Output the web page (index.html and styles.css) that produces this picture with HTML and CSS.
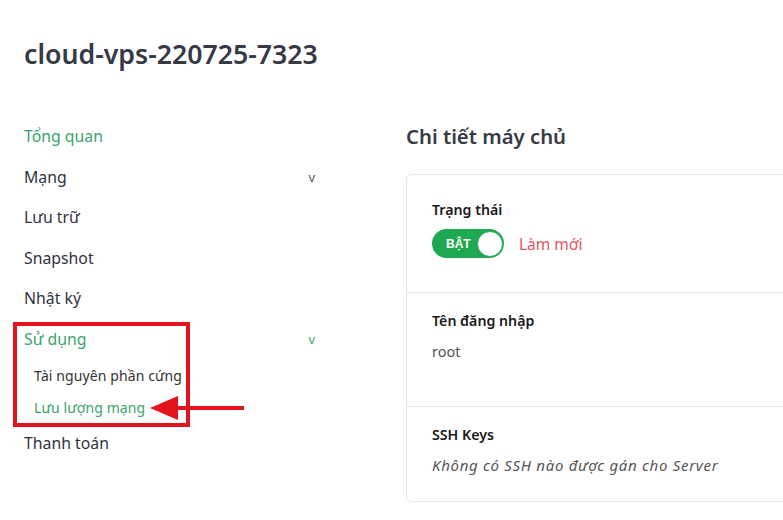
FILE: index.html
```html
<!DOCTYPE html>
<html lang="vi">
<head>
<meta charset="utf-8">
<link rel="stylesheet" href="styles.css">
</head>
<body>
<div class="page">
  <h1 class="title">cloud-vps-220725-7323</h1>
  <div class="layout">
    <nav class="sidebar">
      <div class="nav-item active">Tổng quan</div>
      <div class="nav-item">Mạng <span class="chev">v</span></div>
      <div class="nav-item">Lưu trữ</div>
      <div class="nav-item">Snapshot</div>
      <div class="nav-item">Nhật ký</div>
      <div class="group">
        <div class="nav-item active">Sử dụng <span class="chev green">v</span></div>
        <div class="sub-item">Tài nguyên phần cứng</div>
        <div class="sub-item active">Lưu lượng mạng</div>
        <div class="highlight"></div>
        <div class="arrow">
          <svg width="96" height="28" viewBox="0 0 96 28"><polygon points="0,14 28,2 28,26" fill="#e3141d"/><rect x="26" y="12" width="68" height="4" fill="#e3141d"/></svg>
        </div>
      </div>
      <div class="nav-item">Thanh toán</div>
    </nav>
    <main class="content">
      <h2 class="section-title">Chi tiết máy chủ</h2>
      <div class="card">
        <div class="row row-status">
          <div class="label">Trạng thái</div>
          <div class="status-line">
            <div class="toggle"><span class="toggle-text">BẬT</span><span class="knob"></span></div>
            <span class="refresh">Làm mới</span>
          </div>
        </div>
        <div class="row row-user">
          <div class="label">Tên đăng nhập</div>
          <div class="value">root</div>
        </div>
        <div class="row row-ssh">
          <div class="label">SSH Keys</div>
          <div class="value italic">Không có SSH nào được gán cho Server</div>
        </div>
      </div>
    </main>
  </div>
</div>
</body>
</html>
```
FILE: styles.css
```css
* { box-sizing: border-box; }
html, body { margin: 0; padding: 0; background: #fff; }
body {
  font-family: "Noto Sans", "Open Sans", sans-serif;
  color: #2f3340;
  width: 783px;
  height: 520px;
  overflow: hidden;
}
.page { padding: 0 0 0 24px; }
.title {
  margin: 0;
  padding-top: 35px;
  font-size: 26.7px;
  font-weight: 600;
  line-height: 38px;
  color: #363a45;
}
.layout {
  display: flex;
  margin-top: 53px;
}
.sidebar {
  width: 291px;
  flex: none;
  font-size: 15.8px;
}
.nav-item {
  height: 40.5px;
  line-height: 20px;
  display: flex;
  justify-content: space-between;
  color: #2f3340;
}
.nav-item.active { color: #3aa46a; }
.chev { font-size: 13px; color: #555; }
.chev.green { color: #3aa46a; }
.group { position: relative; height: 104px; }
.group .nav-item { height: 37px; }
.sub-item {
  font-size: 14px;
  line-height: 20px;
  height: 32px;
  padding-left: 10px;
  color: #333;
  letter-spacing: 0.1px;
}
.sub-item.active { color: #3aa46a; }
.highlight {
  position: absolute;
  left: -11px;
  top: -7px;
  width: 177px;
  height: 105px;
  border: 4px solid #e3141d;
}
.arrow {
  position: absolute;
  left: 126px;
  top: 65px;
  line-height: 0;
}
.content {
  margin-left: 91px;
  flex: 1;
}
.section-title {
  margin: 0;
  font-size: 20.3px;
  font-weight: 600;
  line-height: 30px;
  color: #363a45;
  margin-top: -5px;
}
.card {
  margin-top: 23px;
  width: 420px;
  border: 1px solid #e7e7e7;
  border-radius: 6px;
}
.row {
  padding: 19px 25px 0;
  border-bottom: 1px solid #e7e7e7;
}
.row:last-child { border-bottom: none; }
.row-status { height: 118px; padding-top: 26px; }
.row-user { height: 114px; }
.row-ssh { height: 94px; }
.label {
  font-size: 14.2px;
  font-weight: 600;
  line-height: 18px;
  color: #1a1a1a;
}
.value {
  font-size: 14.5px;
  line-height: 20px;
  margin-top: 11px;
  color: #555;
}
.value.italic { font-style: italic; font-size: 15px; letter-spacing: 0.7px; }
.status-line {
  display: flex;
  align-items: center;
  margin-top: 10px;
  gap: 15px;
}
.toggle {
  width: 72px;
  height: 29px;
  border-radius: 15px;
  background: #1ea851;
  display: flex;
  align-items: center;
  justify-content: space-between;
  padding: 0 1px 0 14px;
}
.toggle-text {
  color: #fff;
  font-size: 12px;
  font-weight: 700;
  font-family: "Liberation Sans", sans-serif;
}
.knob {
  width: 26px;
  height: 26px;
  border-radius: 50%;
  background: #fff;
  border: 1px solid #2fa55a;
}
.refresh {
  color: #e05560;
  font-size: 15.5px;
}
```
